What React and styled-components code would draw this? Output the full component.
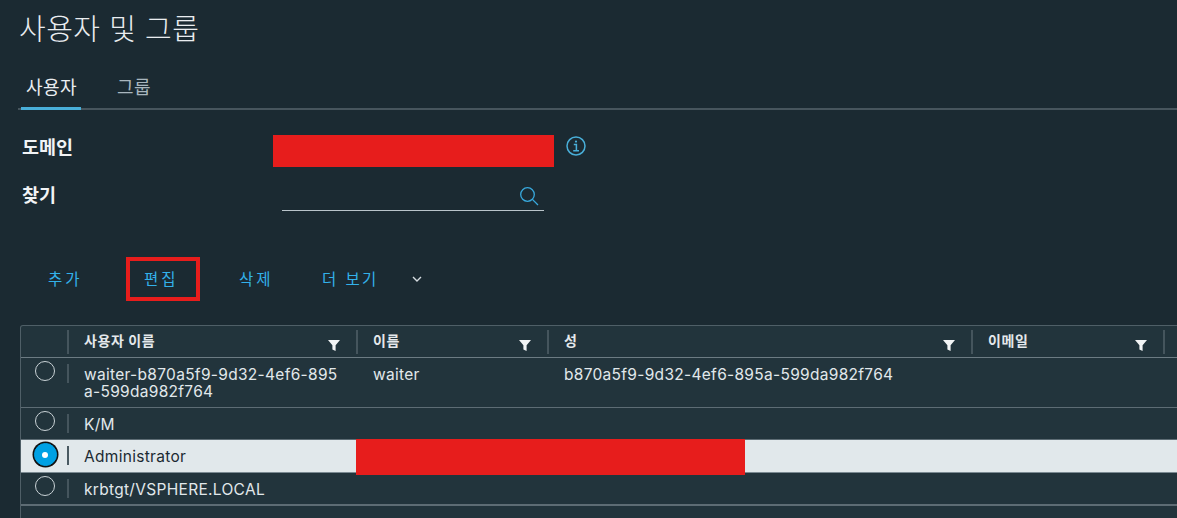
import React from 'react';
import styled, { createGlobalStyle } from 'styled-components';

const GlobalStyle = createGlobalStyle`
  html, body {
    margin: 0;
    padding: 0;
    background: #1b2a32;
    overflow: hidden;
  }
  * { box-sizing: border-box; }
`;

const Page = styled.div`
  position: relative;
  width: 1177px;
  height: 518px;
  overflow: hidden;
  background: #1b2a32;
  color: #e9ecef;
  font-family: Inter, "Noto Sans CJK KR", sans-serif;
`;

const Title = styled.h1`
  margin: 0;
  padding: 9px 0 0 19px;
  height: 72px;
  font-size: 29px;
  line-height: 42px;
  font-weight: 300;
  letter-spacing: 0.5px;
  color: #eaedf0;
`;

const Tabs = styled.div`
  display: flex;
  margin-left: 18px;
  height: 38px;
  border-bottom: 2px solid #47555d;
`;

const Tab = styled.div`
  width: ${({ $w }) => $w}px;
  margin-left: ${({ $ml }) => $ml}px;
  height: 38px;
  padding-left: ${({ $pl }) => $pl}px;
  font-size: 18px;
  line-height: 32px;
  letter-spacing: 0.4px;
  color: ${({ $active }) => ($active ? '#eaedf0' : '#a9b6be')};
  border-bottom: 3px solid ${({ $active }) => ($active ? '#49afd9' : 'transparent')};
`;

const FormRow = styled.div`
  display: flex;
  align-items: center;
  padding-left: 22px;
  height: ${({ $h }) => $h}px;
  margin-top: ${({ $mt }) => $mt}px;
`;

const FieldLabel = styled.label`
  width: 251px;
  padding-bottom: ${({ $lift }) => $lift}px;
  font-size: 18.5px;
  font-weight: 700;
  color: #f1f3f5;
`;

const Redaction = styled.div`
  width: 281px;
  height: 32px;
  background: #e71d1c;
`;

const InfoButton = styled.span`
  display: flex;
  margin-left: 12px;
  margin-top: -10px;
`;

const SearchBox = styled.div`
  display: flex;
  justify-content: flex-end;
  align-items: center;
  width: 262px;
  height: 30px;
  margin-left: 9px;
  padding-right: 5px;
  border-bottom: 1px solid #b9c4ca;
`;

const Actions = styled.div`
  display: flex;
  align-items: center;
  height: 44px;
  margin-top: 46px;
  padding-left: 26px;
`;

const ActionButton = styled.button`
  width: ${({ $w }) => $w}px;
  height: 44px;
  margin: 0;
  padding: 0 0 2px ${({ $pl }) => $pl}px;
  background: none;
  border: ${({ $marked }) => ($marked ? '4px solid #e71d1c' : 'none')};
  color: #33b1ea;
  font-family: inherit;
  font-size: 15.5px;
  letter-spacing: ${({ $spacing }) => $spacing || 3}px;
  text-align: left;
  white-space: nowrap;
`;

const Chevron = styled.span`
  display: flex;
  margin-left: 34px;
`;

const Table = styled.div`
  width: 1180px;
  height: 194px;
  margin: 24px 0 0 20px;
  border: 1px solid #4f5f67;
  border-bottom: none;
  border-radius: 3px 0 0 0;
  background: #22343c;
`;

const Columns = '46px 289px 191px 424px 192px 1fr';

const HeaderRow = styled.div`
  display: grid;
  grid-template-columns: ${Columns};
  height: 32px;
  border-bottom: 1px solid #6c7b83;
`;

const HeaderCell = styled.div`
  position: relative;
  display: flex;
  align-items: center;
  height: 24px;
  margin-top: 4px;
  padding: 0 0 4px 15px;
  font-size: 14px;
  font-weight: 700;
  letter-spacing: 0.6px;
  color: #e4e8eb;
  border-left: ${({ $first }) => ($first ? 'none' : '2px solid #45555d')};
`;

const FilterMark = styled.svg`
  position: absolute;
  right: 16px;
  top: 10px;
`;

const Row = styled.div`
  display: grid;
  grid-template-columns: ${Columns};
  height: ${({ $h }) => $h}px;
  border-bottom: ${({ $last }) => ($last ? 2 : 1)}px solid ${({ $selected }) => ($selected ? '#7b8a92' : '#5d6c74')};
  background: ${({ $selected }) => ($selected ? '#e1e8eb' : 'transparent')};
  color: ${({ $selected }) => ($selected ? '#1b2a32' : '#e1e8eb')};
  font-size: 15.5px;
  line-height: 17px;
  letter-spacing: 0.3px;
`;

const SelectCell = styled.div`
  display: flex;
  justify-content: center;
  padding: 3px 0 0 2px;
`;

const Radio = styled.span`
  display: flex;
  align-items: center;
  justify-content: center;
  width: 20px;
  height: 20px;
  border-radius: 50%;
  border: 1px solid #c9d2d6;
  ${({ $checked }) =>
    $checked &&
    `
    width: 23px;
    height: 23px;
    background: #00a1e4;
    border: 1px solid #00a1e4;
    box-shadow: 0 0 0 1.5px #111;
    &::after {
      content: '';
      width: 6px;
      height: 6px;
      border-radius: 50%;
      background: #fff;
    }
  `}
`;

const Cell = styled.div`
  position: relative;
  padding: 8px 16px 0 17px;
  word-break: break-all;
  &::before {
    content: '';
    position: absolute;
    left: 0;
    top: 6px;
    height: 19px;
    width: 2px;
    background: ${({ $selected }) => ($selected ? '#4a5a62' : '#45555d')};
    display: ${({ $sep }) => ($sep ? 'block' : 'none')};
  }
`;

const Blackout = styled.div`
  position: absolute;
  left: 356px;
  top: 439px;
  width: 389px;
  height: 36px;
  background: #e71d1c;
`;

const headers = ['사용자 이름', '이름', '성', '이메일'];

const users = [
  { id: 1, h: 50, user: 'waiter-b870a5f9-9d32-4ef6-895a-599da982f764', first: 'waiter', last: 'b870a5f9-9d32-4ef6-895a-599da982f764' },
  { id: 2, h: 32, user: 'K/M' },
  { id: 3, h: 33, user: 'Administrator', selected: true },
  { id: 4, h: 33, user: 'krbtgt/VSPHERE.LOCAL', lastRow: true },
];

const Filter = () => (
  <FilterMark width="12" height="11" viewBox="0 0 12 11">
    <path d="M0 0h12L7.6 5.2V11L4.4 9.4V5.2z" fill="#f2f4f5" />
  </FilterMark>
);

const App = () => (
  <Page>
    <GlobalStyle />
    <Title>사용자 및 그룹</Title>
    <Tabs>
      <Tab $active $w={60} $ml={3} $pl={5}>사용자</Tab>
      <Tab $w={60} $ml={31} $pl={5}>그룹</Tab>
    </Tabs>
    <FormRow $h={32} $mt={25}>
      <FieldLabel $lift={10}>도메인</FieldLabel>
      <Redaction />
      <InfoButton>
        <svg width="20" height="20" viewBox="0 0 20 20" fill="none" stroke="#49afd9" strokeWidth="1.5">
          <circle cx="10" cy="10" r="9" />
          <path d="M7.8 8.6H10.4V14.4M7.2 14.8H13" />
          <circle cx="10" cy="5.6" r="1.1" fill="#49afd9" stroke="none" />
        </svg>
      </InfoButton>
    </FormRow>
    <FormRow $h={30} $mt={14}>
      <FieldLabel $lift={4}>찾기</FieldLabel>
      <SearchBox>
        <svg width="20" height="20" viewBox="0 0 20 20" fill="none" stroke="#38a9dd" strokeWidth="1.3">
          <circle cx="8.5" cy="8.5" r="6.8" />
          <path d="M13.4 13.4L19 19" />
        </svg>
      </SearchBox>
    </FormRow>
    <Actions>
      <ActionButton $w={100} $pl={22}>추가</ActionButton>
      <ActionButton $marked $w={74} $pl={14}>편집</ActionButton>
      <ActionButton $w={83} $pl={39}>삭제</ActionButton>
      <ActionButton $w={95} $pl={39} $spacing={2.4}>더 보기</ActionButton>
      <Chevron>
        <svg width="10" height="7" viewBox="0 0 10 7" fill="none" stroke="#d5dce0" strokeWidth="1.4">
          <path d="M1 1l4 4 4-4" />
        </svg>
      </Chevron>
    </Actions>
    <Table>
      <HeaderRow>
        <HeaderCell $first />
        {headers.map((label) => (
          <HeaderCell key={label}>
            {label}
            <Filter />
          </HeaderCell>
        ))}
        <HeaderCell />
      </HeaderRow>
      {users.map(({ id, h, user, first, last, selected, lastRow }) => (
        <Row key={id} $h={h} $selected={selected} $last={lastRow}>
          <SelectCell>
            <Radio $checked={selected} />
          </SelectCell>
          <Cell $sep $selected={selected}>{user}</Cell>
          <Cell>{first}</Cell>
          <Cell>{last}</Cell>
          <Cell />
          <Cell />
        </Row>
      ))}
    </Table>
    <Blackout />
  </Page>
);

export default App;
